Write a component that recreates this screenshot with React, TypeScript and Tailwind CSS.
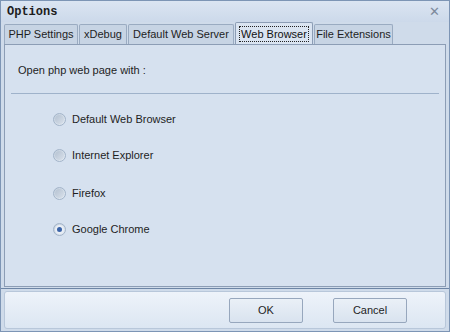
import React from "react";

const font = { fontFamily: "Tahoma, 'Liberation Sans', 'DejaVu Sans', sans-serif" };

function Radio({ checked, label }: { checked?: boolean; label: string }) {
  return (
    <div className="flex items-center h-[14px]">
      <div className="w-[13px] h-[13px] rounded-full border border-[#a3b4c9] bg-gradient-to-br from-[#c3cfdd] to-[#e4ebf3] flex items-center justify-center">
        <div className={"w-[9px] h-[9px] rounded-full flex items-center justify-center " + (checked ? "bg-[#e9eef5]" : "bg-gradient-to-br from-[#b5c2d2] to-[#d8e0ea]")}>
          {checked && <div className="w-[5px] h-[5px] rounded-full bg-[#3a63a8]" />}
        </div>
      </div>
      <span className="ml-[6px] text-[11px] text-[#1e1e1e] leading-none whitespace-nowrap">{label}</span>
    </div>
  );
}

function Tab({ label, active, w }: { label: string; active?: boolean; w: string }) {
  if (active) {
    return (
      <div className={"h-[22px] border border-b-0 border-[#8c9db5] bg-[#dae4f1] rounded-t-[2px] px-[3px] pt-[3px] " + w}>
        <div className="border border-dotted border-[#222] h-[16px] flex items-center justify-center text-[11px] text-[#111] leading-none whitespace-nowrap">{label}</div>
      </div>
    );
  }
  return (
    <div className={"h-[20px] mt-[2px] border border-b-0 border-[#9aabc1] bg-[#c7d4e4] rounded-t-[2px] flex items-center justify-center text-[11px] text-[#1e1e1e] leading-none whitespace-nowrap " + w}>
      {label}
    </div>
  );
}

export default function App() {
  return (
    <div style={font} className="w-[450px] h-[332px] bg-[#cfdbea] border border-[#7d95b5] flex flex-col overflow-hidden">
      <div className="h-[21px] flex items-center justify-between px-[6px] bg-gradient-to-b from-[#dbe5f2] to-[#ccd9ea]">
        <span className="text-[12px] font-bold text-[#1c1c1c]" style={{ fontFamily: "'Liberation Mono', 'DejaVu Sans Mono', monospace" }}>Options</span>
        <span className="text-[13px] font-bold text-[#7d8a9c] mr-[3px]">✕</span>
      </div>
      <div className="flex items-end pl-[3px] gap-[1px] h-[22px]">
        <Tab label="PHP Settings" w="w-[74px]" />
        <Tab label="xDebug" w="w-[48px]" />
        <Tab label="Default Web Server" w="w-[106px]" />
        <Tab label="Web Browser" w="w-[78px]" active />
        <Tab label="File Extensions" w="w-[79px]" />
      </div>
      <div className="mx-[3px] h-[243px] border border-[#8c9db5] bg-[#d6e1ef] flex flex-col">
        <div className="pl-[13px] pt-[20px] text-[11px] text-[#1e1e1e] leading-none">Open php web page with :</div>
        <div className="mx-[6px] mt-[17px] h-px bg-[#9fb2ca]" />
        <div className="pl-[48px] pt-[18px] flex flex-col">
          <Radio label="Default Web Browser" />
          <div className="h-[22px]" />
          <Radio label="Internet Explorer" />
          <div className="h-[24px]" />
          <Radio label="Firefox" />
          <div className="h-[22px]" />
          <Radio label="Google Chrome" checked />
        </div>
      </div>
      <div className="h-px bg-[#6d85a5] mt-[1px]" />
      <div className="mx-[3px] mt-[2px] h-[38px] rounded-[3px] border border-[#b8c7da] bg-gradient-to-b from-[#eef3fa] to-[#dce6f2] flex items-center justify-end pr-[38px] gap-[30px]">
        <button className="w-[74px] h-[25px] rounded-[2px] border border-[#97a7bd] bg-gradient-to-b from-[#eaf0f7] to-[#d9e3ef] text-[11px] text-[#1e1e1e]">OK</button>
        <button className="w-[74px] h-[25px] rounded-[2px] border border-[#97a7bd] bg-gradient-to-b from-[#eaf0f7] to-[#d9e3ef] text-[11px] text-[#1e1e1e]">Cancel</button>
      </div>
    </div>
  );
}
